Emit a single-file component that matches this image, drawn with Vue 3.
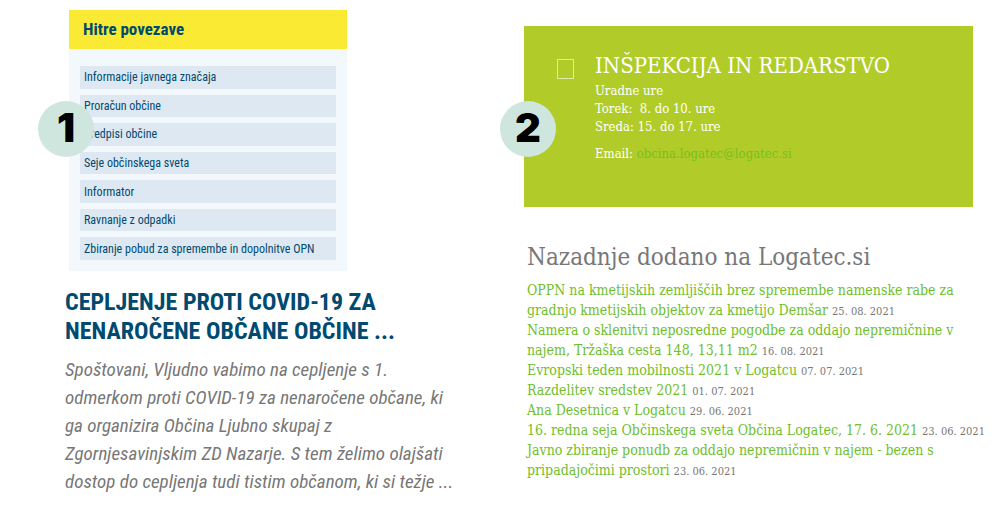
<script setup>
const quickLinks = [
  'Informacije javnega značaja',
  'Proračun občine',
  'Predpisi občine',
  'Seje občinskega sveta',
  'Informator',
  'Ravnanje z odpadki',
  'Zbiranje pobud za spremembe in dopolnitve OPN',
]

const headline = ['CEPLJENJE PROTI COVID-19 ZA', 'NENAROČENE OBČANE OBČINE ...']

const summary = [
  'Spoštovani, Vljudno vabimo na cepljenje s 1.',
  'odmerkom proti COVID-19 za nenaročene občane, ki',
  'ga organizira Občina Ljubno skupaj z',
  'Zgornjesavinjskim ZD Nazarje. S tem želimo olajšati',
  'dostop do cepljenja tudi tistim občanom, ki si težje ...',
]

const hours = ['Uradne ure', 'Torek:\u00a0 8. do 10. ure', 'Sreda: 15. do 17. ure']

const recent = [
  {
    lines: ['OPPN na kmetijskih zemljiščih brez spremembe namenske rabe za', 'gradnjo kmetijskih objektov za kmetijo Demšar'],
    date: '25. 08. 2021',
  },
  {
    lines: ['Namera o sklenitvi neposredne pogodbe za oddajo nepremičnine v', 'najem, Tržaška cesta 148, 13,11 m2'],
    date: '16. 08. 2021',
  },
  { lines: ['Evropski teden mobilnosti 2021 v Logatcu'], date: '07. 07. 2021' },
  { lines: ['Razdelitev sredstev 2021'], date: '01. 07. 2021' },
  { lines: ['Ana Desetnica v Logatcu'], date: '29. 06. 2021' },
  { lines: ['16. redna seja Občinskega sveta Občina Logatec, 17. 6. 2021'], date: '23. 06. 2021' },
  {
    lines: ['Javno zbiranje ponudb za oddajo nepremičnin v najem - bezen s', 'pripadajočimi prostori'],
    date: '23. 06. 2021',
  },
]
</script>

<template>
  <main class="page">
    <section class="left">
      <div class="card">
        <span class="badge">1</span>
        <h2 class="card-title">Hitre povezave</h2>
        <ul class="links">
          <li v-for="item in quickLinks" :key="item"><a href="#">{{ item }}</a></li>
        </ul>
      </div>
      <article>
        <h1 class="headline">
          <template v-for="(line, i) in headline" :key="line"><br v-if="i" />{{ line }}</template>
        </h1>
        <p class="summary">
          <template v-for="(line, i) in summary" :key="line"><br v-if="i" />{{ line }}</template>
        </p>
      </article>
    </section>

    <section class="right">
      <div class="contact">
        <span class="badge">2</span>
        <svg class="glyph" width="18" height="22" viewBox="0 0 18 22" aria-hidden="true">
          <rect x="1.5" y="1.5" width="16" height="19" fill="none" stroke="#e0ebaa" />
        </svg>
        <div>
          <h2 class="contact-title">INŠPEKCIJA IN REDARSTVO</h2>
          <p class="hours">
            <template v-for="(line, i) in hours" :key="line"><br v-if="i" />{{ line }}</template>
          </p>
          <p class="mail">Email: <a href="mailto:obcina.logatec@logatec.si">obcina.logatec@logatec.si</a></p>
        </div>
      </div>
      <div class="recent">
        <h2 class="recent-title">Nazadnje dodano na Logatec.si</h2>
        <ul>
          <li v-for="entry in recent" :key="entry.lines[0]">
            <a href="#"><template v-for="(line, i) in entry.lines" :key="line"><br v-if="i" />{{ line }}</template></a>
            {{ ' ' }}<time>{{ entry.date }}</time>
          </li>
        </ul>
      </div>
    </section>
  </main>
</template>

<style>
body {
  background: #fff;
}
</style>

<style scoped>
h1, h2, p, ul {
  margin: 0;
  padding: 0;
  list-style: none;
}
a {
  color: inherit;
  text-decoration: none;
}
.page {
  display: grid;
  grid-template-columns: 395fr 449fr;
  gap: 64px;
  padding: 10px 27px 12px 65px;
  white-space: nowrap;
}
.left {
  min-width: 0;
  font-family: "Roboto Condensed", "Liberation Sans Narrow", "Liberation Sans", sans-serif;
  color: #004a70;
}
.right {
  min-width: 0;
  padding-top: 16px;
  font-family: "Roboto Slab", "DejaVu Serif Condensed", "DejaVu Serif", serif;
}
.card {
  position: relative;
  max-width: 278px;
  margin-left: 4px;
  background: #f3f8fd;
}
.card-title {
  padding: 0 14px;
  background: #faea33;
  font-size: 17px;
  line-height: 39px;
}
.links {
  display: grid;
  grid-auto-rows: 1fr;
  gap: 6px;
  height: 194px;
  padding: 17px 11px 11px;
}
.links li {
  display: flex;
  align-items: center;
  padding: 0 4px;
  background: #dee8f2;
  font-size: 12px;
  line-height: 16px;
}
.badge {
  position: absolute;
  top: 91px;
  left: -31px;
  width: 56px;
  height: 56px;
  border-radius: 50%;
  background: #cfe6df;
  color: #000;
  font: 900 40px/54px Inter, sans-serif;
  text-align: center;
}
.headline {
  margin-top: 17px;
  font-size: 24px;
  line-height: 29px;
}
.summary {
  margin-top: 10px;
  color: #777;
  font-size: 19px;
  font-style: italic;
  line-height: 28px;
}
.contact {
  position: relative;
  display: flex;
  gap: 21px;
  padding: 24px 32px 44px;
  background: #b1cc29;
  color: #fff;
}
.contact .badge {
  top: 75px;
  left: -24px;
}
.glyph {
  flex: none;
  margin-top: 8px;
}
.contact-title {
  margin-bottom: 1px;
  font-size: 22px;
  font-weight: 400;
  line-height: 31px;
}
.hours, .mail {
  font-size: 13px;
  line-height: 18px;
}
.mail {
  margin-top: 9px;
}
.mail a {
  color: #78be20;
}
.recent {
  padding: 34px 0 0 3px;
  color: #777;
}
.recent-title {
  font-size: 24px;
  font-weight: 400;
  line-height: 32px;
}
.recent ul {
  margin-top: 7px;
  font-size: 14px;
  line-height: 20px;
}
.recent a {
  color: #6fbe2c;
}
.recent time {
  font-size: 11px;
  line-height: 1;
}
</style>
